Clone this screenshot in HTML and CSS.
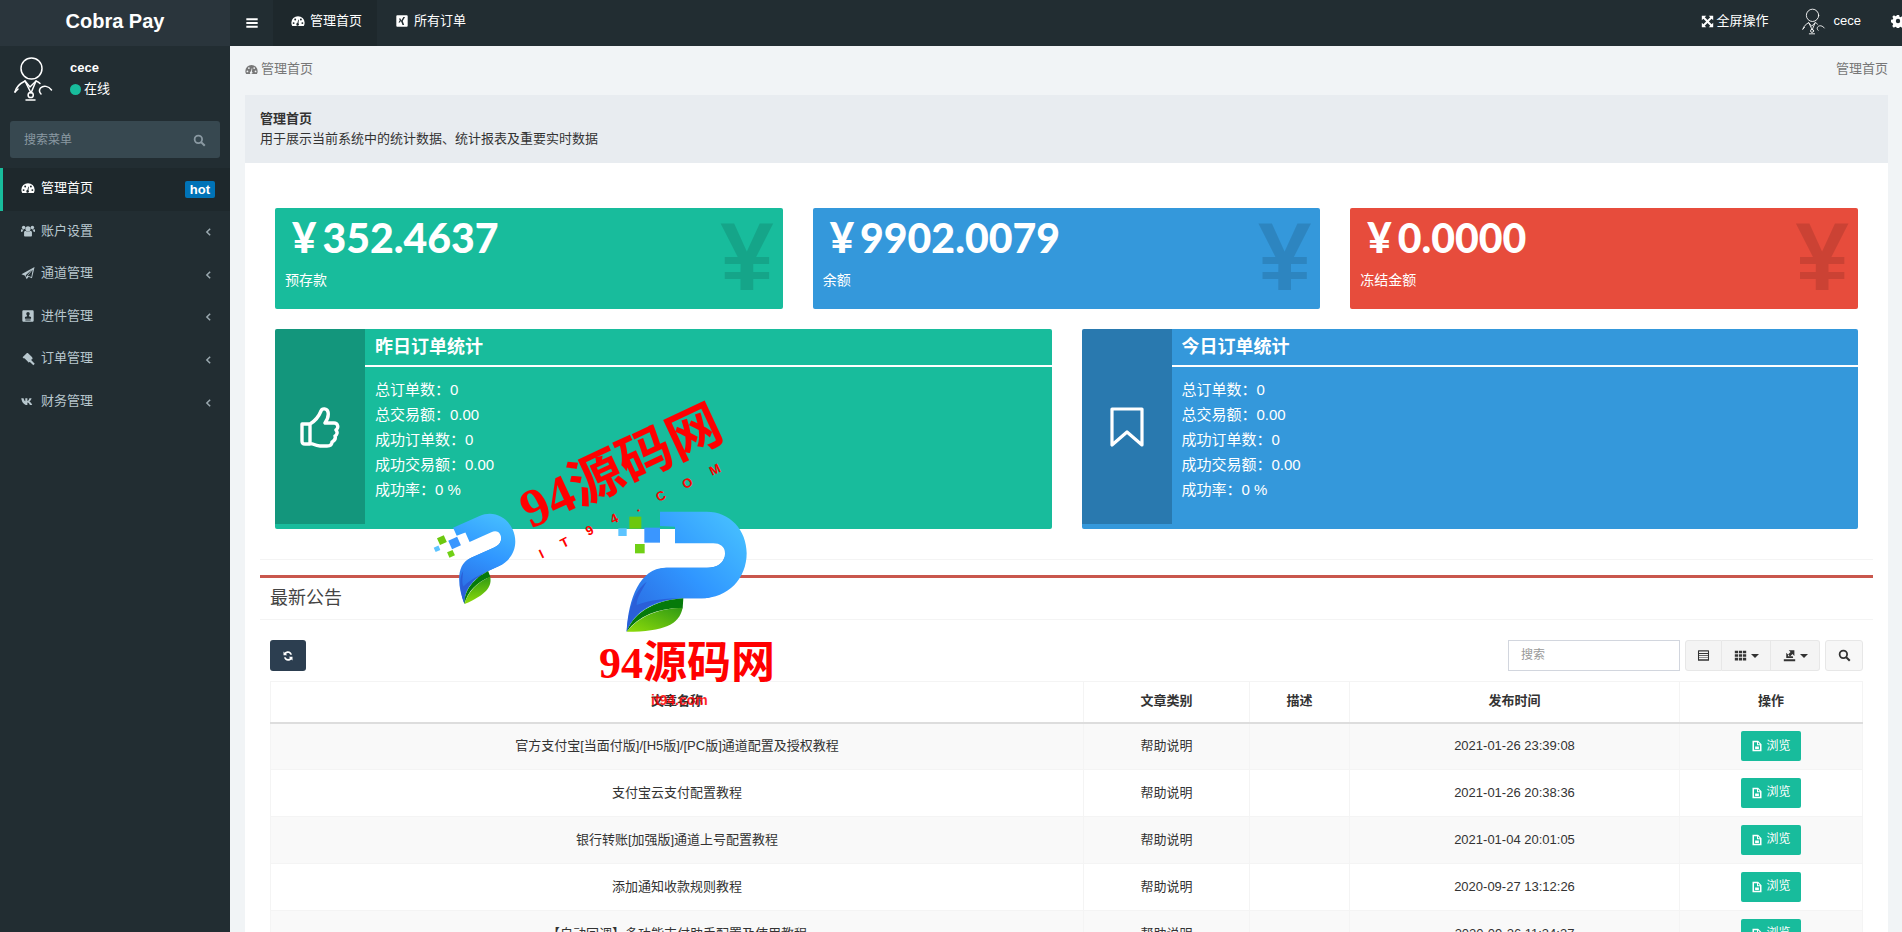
FILE: index.html
```html
<!DOCTYPE html>
<html lang="zh-CN">
<head>
<meta charset="utf-8">
<title>Cobra Pay</title>
<link rel="stylesheet" href="styles.css">
</head>
<body>
<svg class="defs" aria-hidden="true">
  <symbol id="i-dash" viewBox="0 0 16 16"><path fill-rule="evenodd" d="M8 2.5A7.6 7.6 0 0 0 .4 10c0 1.4.4 2.6 1 3.6h13.2c.6-1 1-2.2 1-3.6A7.6 7.6 0 0 0 8 2.500zM3 9.300a1.100 1.100 0 1 1 0 2.200 1.100 1.100 0 0 1 0-2.200zM4.800 5.200a1.100 1.100 0 1 1 0 2.200 1.100 1.100 0 0 1 0-2.200zM11.300 5.200a1.100 1.100 0 1 1 0 2.200 1.100 1.100 0 0 1 0-2.200zM13 9.300a1.100 1.100 0 1 1 0 2.200 1.100 1.100 0 0 1 0-2.200zM8.300 6.500l.7.200-.5 4a1.500 1.500 0 1 1-1.200-.3z"/></symbol>
  <symbol id="i-users" viewBox="0 0 16 16"><circle cx="8" cy="5.500" r="3"/><circle cx="3" cy="4" r="2"/><circle cx="13" cy="4" r="2"/><path d="M3.500 9.500c0-1.200 1.500-1.800 2.500-1.300.6.400 3.400.4 4 0 1-.5 2.500.1 2.500 1.300V13c0 .8-.6 1.200-1.200 1.200H4.700c-.6 0-1.200-.4-1.200-1.200zM0 6.500c0-.4.400-.6.800-.6.500.3 1.500.5 2.200.2.100.6-.1.800-.5 1-.6.400-1 1-1 2H.8C.3 9.100 0 8.800 0 8.400zM16 6.500c0-.4-.4-.6-.8-.6-.5.3-1.500.5-2.200.2-.1.600.1.800.5 1 .6.400 1 1 1 2h.7c.5 0 .8-.3.800-.7z"/></symbol>
  <symbol id="i-plane" viewBox="0 0 16 16"><path fill-rule="evenodd" d="M15.500 1 .5 9.500l4.200 1.700L6.500 15l2.200-2.600 3.800 1.500zM12.600 4 6.600 11.600l-.2 1.300-1-2.200zM13.400 4.300l-1.600 8.200-4-1.500z"/></symbol>
  <symbol id="i-card" viewBox="0 0 16 16"><path fill-rule="evenodd" d="M3 1.500h10c.9 0 1.500.6 1.500 1.500v10c0 .9-.6 1.500-1.500 1.500H3c-.9 0-1.500-.6-1.500-1.500V3c0-.9.6-1.500 1.500-1.500zM8 3.500a2 2 0 0 0-2 2c0 1 .5 1.700 1 2.100v.6l-2.500 1V11h7V9.200l-2.500-1v-.6c.5-.4 1-1.100 1-2.100a2 2 0 0 0-2-2zM5 12v1h6v-1z"/></symbol>
  <symbol id="i-gavel" viewBox="0 0 16 16"><path d="M6.800 1 1.800 6l1.500 1.500.7-.3 4.800 4.800-.3.700 1.500-1.500-.1-.1 4.200 4 1.600-1.700-4.100-4.200 1-1.100.7.200L12.800 6 7.800 1z"/></symbol>
  <symbol id="i-vk" viewBox="0 0 16 16"><path d="M.3 4.800h2.600c.3 1.500 1.300 3.400 2 3.500V4.800h2.400v3.300c.8 0 1.900-1.800 2.300-3.300h2.500c-.3 1.700-1.700 3.300-2.500 3.900.9.500 2.600 1.900 3.200 3.800h-2.700c-.5-1.300-1.700-2.500-2.800-2.700v2.700h-.9C4.200 12.500 1 10 .3 4.800z"/></symbol>
  <symbol id="i-k" viewBox="0 0 16 16"><path fill-rule="evenodd" d="M2.500 1.500h11c.6 0 1 .4 1 1v11c0 .6-.4 1-1 1h-11c-.6 0-1-.4-1-1v-11c0-.6.4-1 1-1zM11.500 3.500H9.600L6.800 8l1.800 4.500h1.900L8.800 8zM6.200 5H4.500l1 2-1.500 2.700h1.700L7.100 7z"/></symbol>
  <symbol id="i-bars" viewBox="0 0 16 16"><path d="M1.500 2.500h13v2.400h-13zM1.500 6.800h13v2.400h-13zM1.500 11.100h13v2.400h-13z"/></symbol>
  <symbol id="i-expand" viewBox="0 0 16 16"><path d="M1 1h5.500L4.600 2.900 8 6.300l3.400-3.400L9.500 1H15v5.500l-1.900-1.900L9.700 8l3.400 3.400L15 9.500V15H9.500l1.900-1.900L8 9.700l-3.400 3.400L6.500 15H1V9.500l1.900 1.900L6.300 8 2.900 4.600 1 6.500z"/></symbol>
  <symbol id="i-cog" viewBox="0 0 16 16"><path fill-rule="evenodd" d="M6.700 1h2.600l.4 2 1.300.6 1.800-1.100 1.800 1.800-1.100 1.800.6 1.300 1.900.4v2.600l-2 .4-.6 1.300 1.100 1.800-1.800 1.800-1.800-1.100-1.300.6-.4 1.900H6.700l-.4-2-1.300-.6-1.800 1.100-1.800-1.800 1.100-1.800-.6-1.300L0 9.300V6.700l2-.4.600-1.300-1.100-1.800 1.800-1.800 1.800 1.100 1.300-.6zM8 5.500a2.500 2.500 0 1 0 0 5 2.500 2.500 0 0 0 0-5z"/></symbol>
  <symbol id="i-search" viewBox="0 0 16 16"><circle cx="6.600" cy="6.600" r="4.600" fill="none" stroke="currentColor" stroke-width="2.200"/><path d="m10 10 4.500 4.500" fill="none" stroke="currentColor" stroke-width="2.600"/></symbol>
  <symbol id="i-chev" viewBox="0 0 8 12"><path d="M6 2 2 6l4 4" fill="none" stroke="currentColor" stroke-width="1.800"/></symbol>
  <symbol id="i-refresh" viewBox="0 0 16 16"><path d="M13.200 6.300h-2.100C10.600 4.900 9.400 4 8 4c-1.100 0-2.100.5-2.700 1.400L7 7H2V2l1.500 1.500C4.600 2.400 6.200 1.600 8 1.600c2.700 0 4.800 2 5.200 4.700zM2.800 9.700h2.100C5.400 11.100 6.600 12 8 12c1.100 0 2.100-.5 2.700-1.400L9 9h5v5l-1.500-1.500c-1.100 1.100-2.700 1.900-4.500 1.900-2.700 0-4.800-2-5.200-4.700z"/></symbol>
  <symbol id="i-list" viewBox="0 0 16 16"><path fill-rule="evenodd" d="M2 1.500h12c.5 0 .8.300.8.800v11.400c0 .5-.3.800-.8.800H2c-.5 0-.8-.3-.8-.8V2.300c0-.5.300-.8.800-.8zM2.500 3v2h11V3zM2.500 6v1.400h11V6zM2.500 8.300v1.400h11V8.300zM2.500 10.600V12.500h11v-1.900z"/></symbol>
  <symbol id="i-th" viewBox="0 0 16 16"><path d="M1 2h4v3.200H1zM6 2h4v3.200H6zM11 2h4v3.200h-4zM1 6.400h4v3.200H1zM6 6.400h4v3.200H6zM11 6.400h4v3.200h-4zM1 10.800h4V14H1zM6 10.800h4V14H6zM11 10.800h4V14h-4z"/></symbol>
  <symbol id="i-export" viewBox="0 0 16 16"><path d="M1 12.500h14V15H1zM4 4.500V11h8.500L12 9H6.200V6.800zM7 1.500h7v7l-2.300-2.200-3 3-2.400-2.500 3-3z"/></symbol>
  <symbol id="i-file" viewBox="0 0 16 16"><path fill-rule="evenodd" d="M2 1h7.500L14 5.500V15H2zM4 3v10h8V7H8V3zM9.300 3v2.800H12zM5.500 8.500h5v3.500h-5z"/></symbol>
  <symbol id="i-avatar" viewBox="0 0 40 46"><g fill="none" stroke="#fff" stroke-width="1.500" stroke-linecap="round"><circle cx="17.500" cy="12.500" r="10.500"/><path d="M1 36c1-5 6-9 10-11l5 6 6-6c1 .3 3 1.200 4 2.500"/><path d="M11 25l6 12M22 25l-5 12"/><circle cx="16.700" cy="39" r="2.600"/><path d="M27 38c-2-2-2-4-.5-6 3-3 8-2 11 2"/><path d="M4 33c-1 1-2 2-3 3M12 44h9"/></g></symbol>
  <symbol id="i-thumb" viewBox="0 0 40 42"><path fill="none" stroke="#fff" stroke-width="3.400" stroke-linejoin="round" d="M10 18c5-3 9-8 11-13 1-3 6-3 7 1 1 4-1 8-3 11h9c4 0 5 5 2 7 2 2 1 5-1 6 1 3-1 5-3 6 0 3-2 4-5 4H20c-4 0-7-2-10-3zM2 18h8v20H5c-2 0-3-1-3-3z"/></symbol>
  <symbol id="i-mark" viewBox="0 0 34 40"><path fill="none" stroke="#fff" stroke-width="3.200" stroke-linejoin="round" d="M2 2h30v36L17 25 2 38z"/></symbol>
  <linearGradient id="g-arch" x1="0" y1="1" x2="1" y2="0"><stop offset="0" stop-color="#2a62dc"/><stop offset=".5" stop-color="#3096ff"/><stop offset="1" stop-color="#4ac6ff"/></linearGradient>
  <linearGradient id="g-leaf" x1="0" y1="1" x2="1" y2="0"><stop offset="0" stop-color="#8fdc0a"/><stop offset="1" stop-color="#2f9a14"/></linearGradient>
  <symbol id="i-logo" viewBox="670 325 380 380" overflow="visible">
    <path fill="#257de8" d="M975 470c-10 25-25 32-55 33H800c-75 5-105 90-120 192 25-70 100-97 170-100h55c60 0 90-50 70-125z"/>
    <path fill="url(#g-arch)" d="M780 335h140c70 0 120 55 120 125 0 75-55 135-135 135h-55c-70 3-145 30-170 100 5-100 40-190 115-192h130c40 0 50-28 50-43 0-20-15-30-35-30H825v-50l-45-2z"/>
    <path fill="#2a5fd8" d="M680 695c5-60 20-120 60-150-20 35-30 50-30 70 40-15 90-20 140-20h-5c-70 3-145 30-165 100z"/>
    <path fill="#057a0a" d="M680 695c25-65 95-95 170-100l-2 30c-70-2-130 20-168 70z"/>
    <path fill="url(#g-leaf)" d="M680 695c40-50 100-70 168-72-10 50-55 72-168 72z"/>
    <rect x="688" y="350" width="36" height="36" fill="#6cc80e"/><rect x="655" y="385" width="25" height="23" fill="#5cc4ff"/><rect x="733" y="383" width="47" height="45" fill="#3a96ff"/><rect x="705" y="432" width="29" height="28" fill="#70d015"/>
  </symbol>
</svg>

<header class="topbar">
  <div class="brand">Cobra Pay</div>
  <nav class="topnav">
    <span class="burger"><svg class="ic"><use href="#i-bars"/></svg></span>
    <a class="tab tab-on"><svg class="ic"><use href="#i-dash"/></svg>管理首页</a>
    <a class="tab"><svg class="ic"><use href="#i-k"/></svg>所有订单</a>
  </nav>
  <div class="topright">
    <a class="tool"><svg class="ic ic-exp"><use href="#i-expand"/></svg>全屏操作</a>
    <a class="me"><svg class="avatar-sm"><use href="#i-avatar"/></svg><span>cece</span></a>
    <a class="cog"><svg class="ic"><use href="#i-cog"/></svg></a>
  </div>
</header>

<div class="layout">
  <aside class="side">
    <div class="user">
      <svg class="avatar"><use href="#i-avatar"/></svg>
      <div class="user-info">
        <div class="user-name">cece</div>
        <div class="user-state"><i class="dot"></i>在线</div>
      </div>
    </div>
    <div class="side-search"><span>搜索菜单</span><svg class="ic"><use href="#i-search"/></svg></div>
    <ul class="menu">
      <li class="menu-item on"><svg class="ic"><use href="#i-dash"/></svg><span class="menu-label">管理首页</span><b class="hot">hot</b></li>
      <li class="menu-item"><svg class="ic"><use href="#i-users"/></svg><span class="menu-label">账户设置</span><svg class="chev"><use href="#i-chev"/></svg></li>
      <li class="menu-item"><svg class="ic"><use href="#i-plane"/></svg><span class="menu-label">通道管理</span><svg class="chev"><use href="#i-chev"/></svg></li>
      <li class="menu-item"><svg class="ic"><use href="#i-card"/></svg><span class="menu-label">进件管理</span><svg class="chev"><use href="#i-chev"/></svg></li>
      <li class="menu-item"><svg class="ic"><use href="#i-gavel"/></svg><span class="menu-label">订单管理</span><svg class="chev"><use href="#i-chev"/></svg></li>
      <li class="menu-item"><svg class="ic"><use href="#i-vk"/></svg><span class="menu-label">财务管理</span><svg class="chev"><use href="#i-chev"/></svg></li>
    </ul>
  </aside>

  <main class="main">
    <div class="crumbs">
      <span class="crumb-l"><svg class="ic"><use href="#i-dash"/></svg>管理首页</span>
      <span>管理首页</span>
    </div>
    <section class="intro">
      <strong>管理首页</strong>
      <div>用于展示当前系统中的统计数据、统计报表及重要实时数据</div>
    </section>
    <section class="panel">
      <div class="stats">
        <div class="stat teal"><h3>¥<span class="amount">352.4637</span></h3><p>预存款</p><span class="stat-bg">¥</span></div>
        <div class="stat blue"><h3>¥<span class="amount">9902.0079</span></h3><p>余额</p><span class="stat-bg">¥</span></div>
        <div class="stat red"><h3>¥<span class="amount">0.0000</span></h3><p>冻结金额</p><span class="stat-bg">¥</span></div>
      </div>
      <div class="infos">
        <div class="info teal">
          <div class="info-icon"><svg class="bigic"><use href="#i-thumb"/></svg></div>
          <div class="info-body">
            <h4>昨日订单统计</h4>
            <ul>
              <li>总订单数&#65306;0</li><li>总交易额&#65306;0.00</li><li>成功订单数&#65306;0</li><li>成功交易额&#65306;0.00</li><li>成功率&#65306;0 %</li>
            </ul>
          </div>
        </div>
        <div class="info blue">
          <div class="info-icon"><svg class="bigic mark"><use href="#i-mark"/></svg></div>
          <div class="info-body">
            <h4>今日订单统计</h4>
            <ul>
              <li>总订单数&#65306;0</li><li>总交易额&#65306;0.00</li><li>成功订单数&#65306;0</li><li>成功交易额&#65306;0.00</li><li>成功率&#65306;0 %</li>
            </ul>
          </div>
        </div>
      </div>
      <div class="box">
        <div class="box-head">最新公告</div>
        <div class="box-body">
          <div class="toolbar">
            <button class="btn-dark"><svg class="ic"><use href="#i-refresh"/></svg></button>
            <div class="tools">
              <div class="search-field">搜索</div>
              <div class="group">
                <button class="g1"><svg class="ic"><use href="#i-list"/></svg></button>
                <button class="g2"><svg class="ic"><use href="#i-th"/></svg><i class="caret"></i></button>
                <button class="g2"><svg class="ic"><use href="#i-export"/></svg><i class="caret"></i></button>
              </div>
              <button class="solo"><svg class="ic"><use href="#i-search"/></svg></button>
            </div>
          </div>
          <table class="grid">
            <thead><tr><th>文章名称</th><th>文章类别</th><th>描述</th><th>发布时间</th><th>操作</th></tr></thead>
            <tbody>
              <tr><td>官方支付宝[当面付版]/[H5版]/[PC版]通道配置及授权教程</td><td>帮助说明</td><td></td><td>2021-01-26 23:39:08</td><td><a class="view"><svg class="ic"><use href="#i-file"/></svg>浏览</a></td></tr>
              <tr><td>支付宝云支付配置教程</td><td>帮助说明</td><td></td><td>2021-01-26 20:38:36</td><td><a class="view"><svg class="ic"><use href="#i-file"/></svg>浏览</a></td></tr>
              <tr><td>银行转账[加强版]通道上号配置教程</td><td>帮助说明</td><td></td><td>2021-01-04 20:01:05</td><td><a class="view"><svg class="ic"><use href="#i-file"/></svg>浏览</a></td></tr>
              <tr><td>添加通知收款规则教程</td><td>帮助说明</td><td></td><td>2020-09-27 13:12:26</td><td><a class="view"><svg class="ic"><use href="#i-file"/></svg>浏览</a></td></tr>
              <tr><td>【自动回调】多功能支付助手配置及使用教程</td><td>帮助说明</td><td></td><td>2020-09-26 11:34:37</td><td><a class="view"><svg class="ic"><use href="#i-file"/></svg>浏览</a></td></tr>
            </tbody>
          </table>
        </div>
      </div>
    </section>
  </main>
</div>

<div class="watermark">
  <svg class="wm-art" viewBox="0 0 1200 1020" aria-hidden="true">
    <use href="#i-logo" x="670" y="325" width="380" height="380"/>
    <use class="wm-small" href="#i-logo" x="670" y="325" width="380" height="380"/>
  </svg>
  <div class="wm-slant">94源码网</div>
  <div class="wm-slant-sub">IT94.COM</div>
  <div class="wm-flat">94源码网</div>
  <div class="wm-flat-sub">it94.com</div>
</div>
</body>
</html>
```
FILE: styles.css
```css
* { box-sizing: border-box; }
html, body { margin: 0; height: 932px; overflow: hidden; }
body {
  position: relative;
  font: 13px/1.42857 "Liberation Sans", "Noto Sans CJK SC", sans-serif;
  color: #333;
  background: #f1f4f6;
}
.defs { position: absolute; width: 0; height: 0; }
ul { list-style: none; margin: 0; padding: 0; }
.ic { width: 14px; height: 14px; fill: currentColor; flex: none; }

.topbar { display: flex; height: 46px; background: #222d32; color: #fff; }
.brand { width: 230px; background: #2a353c; font-size: 20px; font-weight: 700; line-height: 42px; text-align: center; }
.topnav { display: flex; align-items: stretch; }
.burger { width: 43px; display: flex; align-items: center; justify-content: center; }
.tab { display: flex; align-items: center; gap: 5px; padding: 0 15px 4px 18px; }
.tab-on { background: #1e282c; }
.topright { margin-left: auto; display: flex; align-items: center; padding-bottom: 4px; }
.tool { display: flex; align-items: center; gap: 3px; }
.ic-exp { width: 13px; height: 13px; }
.me { display: flex; align-items: center; margin-left: 33px; gap: 8px; }
.avatar-sm { width: 24px; height: 27px; }
.cog { margin-left: 30px; width: 11px; overflow: hidden; display: flex; }

.layout { display: flex; height: 886px; }
.side { width: 230px; flex: none; background: #222d32; color: #b8c7ce; }
.user { display: flex; height: 75px; padding: 10px 0 0 14px; }
.avatar { width: 40px; height: 46px; }
.user-info { margin-left: 16px; color: #fff; padding-top: 2px; }
.user-name { font-weight: 700; line-height: 20px; }
.user-state { display: flex; align-items: center; line-height: 22px; gap: 3px; }
.dot { width: 11px; height: 11px; border-radius: 50%; background: #18bc9c; }
.side-search { display: flex; align-items: center; justify-content: space-between; height: 37px; margin: 0 10px; padding: 2px 14px 0; background: #374850; border-radius: 3px; color: #8a99a2; font-size: 12px; }
.side-search .ic { width: 13px; height: 13px; }
.menu { margin-top: 10px; }
.menu-item { display: flex; align-items: center; height: 42.57px; padding: 0 15px 2px 21px; }
.menu-item .ic { width: 14px; height: 14px; margin-right: 6px; }
.menu-label { flex: 1; }
.menu-item.on { background: #1e282c; color: #fff; box-shadow: inset 3px 0 0 #18bc9c; }
.hot { background: #0073b7; color: #fff; font-size: 13px; line-height: 17px; padding: 0 5px; border-radius: 2px; margin-top: 2px; }
.chev { width: 7px; height: 10px; margin: 3px 3px 0 0; opacity: .8; }

.main { flex: 1; padding: 0 14px 0 15px; min-width: 0; }
.crumbs { display: flex; justify-content: space-between; align-items: center; height: 49px; padding-bottom: 2px; color: #777; }
.crumb-l { display: flex; align-items: center; gap: 3px; }
.crumb-l .ic { width: 13px; height: 13px; }
.intro { background: #e8ecf0; padding: 14px 15px; height: 68px; line-height: 20px; }
.intro strong { display: block; }
.panel { background: #fff; padding: 45px 15px 0; height: 770px; }
.teal { background: #18bc9c; }
.blue { background: #3498db; }
.red { background: #e74c3c; }

.stats { display: grid; grid-template-columns: repeat(3, 1fr); gap: 30px; padding: 0 15px; }
.stat { position: relative; height: 101px; border-radius: 2px; color: #fff; padding: 4px 10px; }
.stat h3 { margin: 0; padding-left: 7px; font: 900 42px/50px Lato, sans-serif; }
.amount { margin-left: 6px; font-size: 41px; }
.stat p { margin: 7px 0 0; font-size: 14px; line-height: 20px; }
.stat-bg { position: absolute; right: 9px; top: -1px; font: 700 96px/100px "Liberation Sans", sans-serif; color: rgba(0, 0, 0, .12); }

.infos { display: grid; grid-template-columns: 1fr 1fr; gap: 30px; padding: 0 15px; margin-top: 20px; }
.info { display: flex; height: 200px; border-radius: 2px; color: #fff; overflow: hidden; }
.info-icon { width: 90px; height: 195px; background: rgba(0, 0, 0, .2); display: flex; align-items: center; justify-content: center; }
.bigic { width: 40px; height: 42px; }
.bigic.mark { width: 34px; height: 40px; }
.info-body { flex: 1; }
.info-body h4 { margin: 0; height: 38px; padding: 6px 10px 0; border-bottom: 2px solid #fff; font-size: 18px; line-height: 24px; font-weight: 700; }
.info-body ul { padding: 10px 10px 0; font-size: 15px; line-height: 25px; }

.box { margin-top: 30px; padding-top: 15px; border-top: 1px solid #f4f4f4; }
.box-head { border-top: 3px solid #c9574d; height: 45px; padding: 8px 10px 0; font-size: 18px; line-height: 24px; color: #444; border-bottom: 1px solid #f4f4f4; }
.box-body { padding: 20px 10px 0; }
.toolbar { display: flex; justify-content: space-between; height: 31px; margin-bottom: 10px; }
button { font: inherit; cursor: pointer; padding: 0; display: flex; align-items: center; justify-content: center; }
.btn-dark { width: 36px; height: 31px; border: 0; border-radius: 3px; background: #2c3e50; color: #fff; }
.btn-dark .ic { width: 12px; height: 12px; }
.tools { display: flex; gap: 5px; }
.search-field { width: 172px; height: 31px; border: 1px solid #d2d6de; padding: 0 12px; line-height: 29px; font-size: 12px; color: #999; }
.group { display: flex; }
.group button, .solo { height: 31px; background: #f4f4f4; border: 1px solid #e7e7e7; color: #333; }
.group .ic, .solo .ic { width: 13px; height: 13px; }
.group .g1 { width: 37px; border-radius: 3px 0 0 3px; }
.group .g2 { width: 49px; gap: 4px; border-left: 0; }
.group .g2:last-child { border-radius: 0 3px 3px 0; }
.solo { width: 38px; border-radius: 3px; background: #f7f7f7; }
.caret { border: 4px solid transparent; border-top-color: #333; border-bottom: 0; }

.grid { width: 100%; border-collapse: collapse; table-layout: fixed; text-align: center; }
.grid th:nth-child(2) { width: 166px; }
.grid th:nth-child(3) { width: 100px; }
.grid th:nth-child(4) { width: 330px; }
.grid th:nth-child(5) { width: 183px; }
.grid th, .grid td { border: 1px solid #f4f4f4; padding: 0; }
.grid th { height: 41px; border-bottom: 2px solid #ddd; font-weight: 700; }
.grid td { height: 47px; }
.grid tbody tr:nth-child(odd) { background: #f9f9f9; }
.view { display: inline-flex; align-items: center; justify-content: center; gap: 3px; width: 60px; height: 30px; border-radius: 2px; background: #18bc9c; color: #fff; font-size: 12px; vertical-align: middle; }
.view .ic { width: 12px; height: 12px; }

.watermark { position: absolute; inset: 0; pointer-events: none; color: #f00; font-family: "Liberation Serif", "Noto Sans CJK SC", serif; font-weight: 700; white-space: nowrap; }
.wm-art { position: absolute; left: 400px; top: 400px; width: 400px; height: 340px; overflow: visible; }
.wm-small { transform-origin: 860px 515px; transform: translate(-610px, -50px) rotate(-24deg) scale(.62); }
.wm-slant { position: absolute; left: 513px; top: 439px; font-size: 54px; line-height: 56px; transform: rotate(-25deg); }
.wm-slant-sub { position: absolute; left: 529px; top: 499px; font: 700 13px/16px "Liberation Sans", sans-serif; letter-spacing: 20px; transform: rotate(-25.9deg); }
.wm-flat { position: absolute; left: 599px; top: 638px; font-size: 44px; line-height: 52px; }
.wm-flat-sub { position: absolute; left: 651px; top: 691px; font: 700 14px/18px "Liberation Sans", sans-serif; opacity: .85; }
```
